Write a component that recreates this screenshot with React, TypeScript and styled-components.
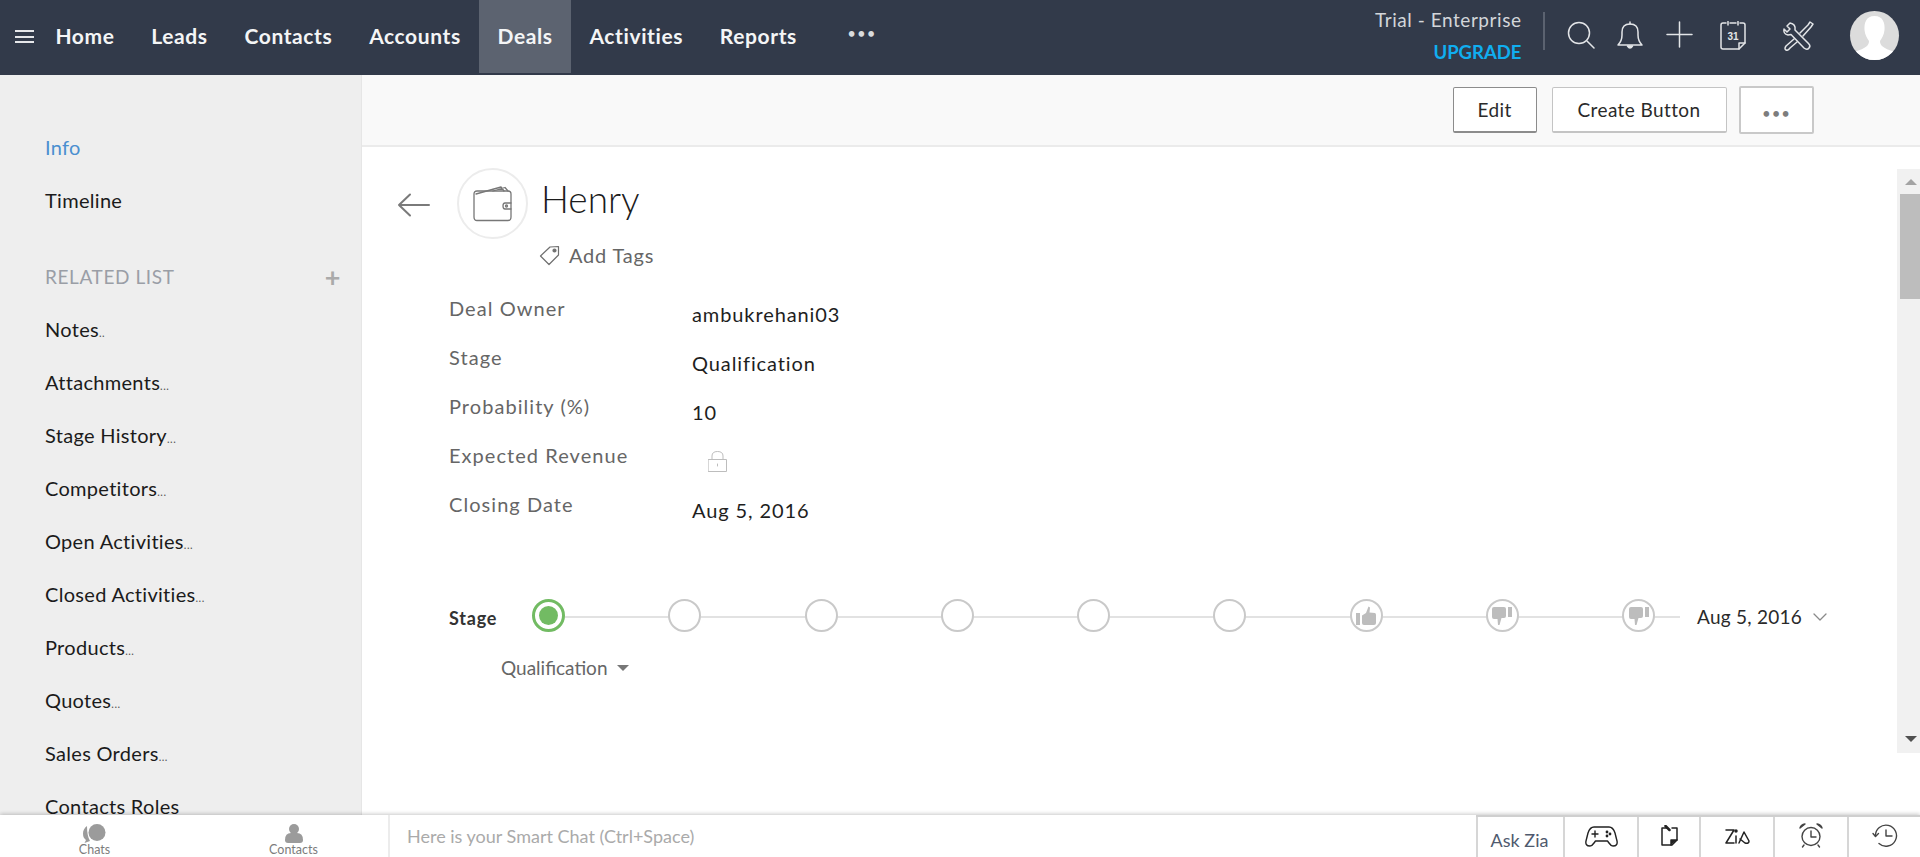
import { FC, ReactNode } from "react";
import styled, { createGlobalStyle } from "styled-components";

const NAV_ITEMS = ["Home", "Leads", "Contacts", "Accounts", "Deals", "Activities", "Reports"];
const SIDE_ITEMS = [
  { name: "Notes", dots: ".." },
  { name: "Attachments", dots: "..." },
  { name: "Stage History", dots: "..." },
  { name: "Competitors", dots: "..." },
  { name: "Open Activities", dots: "..." },
  { name: "Closed Activities", dots: "..." },
  { name: "Products", dots: "..." },
  { name: "Quotes", dots: "..." },
  { name: "Sales Orders", dots: "..." },
  { name: "Contacts Roles", dots: "" },
];
const FIELDS = [
  { label: "Deal Owner", value: "ambukrehani03" },
  { label: "Stage", value: "Qualification" },
  { label: "Probability (%)", value: "10" },
  { label: "Expected Revenue", value: null },
  { label: "Closing Date", value: "Aug 5, 2016" },
];

const Line: FC<{ w: number; h: number; vb?: string; c?: string; sw?: number; children: ReactNode }> = ({
  w,
  h,
  vb,
  c = "currentColor",
  sw = 1.5,
  children,
}) => (
  <svg
    width={w}
    height={h}
    viewBox={vb ?? `0 0 ${w} ${h}`}
    fill="none"
    stroke={c}
    strokeWidth={sw}
    strokeLinecap="round"
    strokeLinejoin="round"
  >
    {children}
  </svg>
);

const ThumbUp = () => (
  <svg width="20" height="20" viewBox="0 0 20 20" fill="#bdbdbd">
    <rect x="0" y="7" width="4" height="12" />
    <path d="M6 9.500 L10 7 L12.500 0.500 L14 1.500 L13.500 6.500 L19 7 Q20 7.500 20 9 L20 17 Q20 19 18 19 L8 19 Q6 19 6 17 Z" />
  </svg>
);

const ThumbDown = () => (
  <svg width="20" height="18" viewBox="0 0 20 18" fill="#bdbdbd">
    <rect x="16" y="0" width="4" height="10" />
    <path d="M2 0 L12 0 Q14 0 14 2 L14 9 Q14 11 12 11 L9.500 11 L7.500 18 L6 18 L5.500 12 L2 12 Q0 12 0 10 L0 2 Q0 0 2 0 Z" />
  </svg>
);

export default function App() {
  return (
    <Page>
      <GlobalStyle />
      <TopBar>
        <Burger>
          <i />
          <i />
          <i />
        </Burger>
        <Nav>
          {NAV_ITEMS.map((n) => (
            <NavItem key={n} $active={n === "Deals"}>
              {n}
            </NavItem>
          ))}
          <NavMore>•••</NavMore>
        </Nav>
        <TopRight>
          <Trial>
            <span>Trial - Enterprise</span>
            <b>UPGRADE</b>
          </Trial>
          <TopSep />
          <TopIcons>
            <Line w={28} h={28} c="#e3e5e8">
              <circle cx="12" cy="12" r="10.500" />
              <path d="M20 20 L27 27" />
            </Line>
            <Line w={30} h={30} c="#e3e5e8">
              <path d="M3 24 Q7 20 7 14 L7 11 Q7 3 15 3 Q23 3 23 11 L23 14 Q23 20 27 24 Z" />
              <path d="M15 1 V3" />
              <path d="M12.500 25 Q15 29 17.500 25 Z" fill="#e3e5e8" />
            </Line>
            <Line w={27} h={27} c="#e3e5e8">
              <path d="M13.500 1 V26 M1 13.500 H26" />
            </Line>
            <Line w={26} h={29} c="#e3e5e8">
              <path d="M6 2 H3 Q1 2 1 4 V26 Q1 28 3 28 H19 L25 22 V4 Q25 2 23 2 H20" />
              <path d="M10 2 H16 M8 0.500 V4 M18 0.500 V4 M19 28 V22 H25" />
              <CalendarDay x="13" y="19" textAnchor="middle">
                31
              </CalendarDay>
            </Line>
            <Line w={32} h={30} c="#e3e5e8">
              <path d="M8 2 L5 5 L8 8 L5 11 L2 8 Q1 13 6 14 L9 13.500 L22 27 Q25 29.500 27 27 Q29 25 26.500 22.500 L13 9 Q14 3 8 2 Z" />
              <path d="M18 12 L26 4 L28 1 L31 3 L29 6 L21 15 M12 18 L4 25 Q2 28 4 29 Q6 30 8 27 L15 21" />
            </Line>
          </TopIcons>
          <Avatar>
            <svg width="49" height="49" viewBox="0 0 49 49">
              <path
                fill="#fff"
                d="M24.500 5 C16 5 14 12 14.500 19 C15 24 17 27 19 30 C19 34 17 37 4 41 L4 49 L45 49 L45 41 C32 37 30 34 30 30 C32 27 34 24 34.500 19 C35 12 33 5 24.500 5 Z"
              />
            </svg>
          </Avatar>
        </TopRight>
      </TopBar>

      <Body>
        <Sidebar>
          <SideLink $active>Info</SideLink>
          <SideLink>Timeline</SideLink>
          <RelatedHead>
            <span>RELATED LIST</span>
            <b>+</b>
          </RelatedHead>
          {SIDE_ITEMS.map((s) => (
            <SideLink key={s.name}>
              {s.name}
              <SideDots>{s.dots}</SideDots>
            </SideLink>
          ))}
        </Sidebar>

        <Content>
          <ActionBar>
            <ActionButton $w={84} $dark>
              Edit
            </ActionButton>
            <ActionButton $w={175}>Create Button</ActionButton>
            <MoreButton>•••</MoreButton>
          </ActionBar>

          <Main>
            <Record>
              <RecordHead>
                <BackArrow>
                  <Line w={33} h={24} c="#7a7a7a" sw={2}>
                    <path d="M32 12 H2 M13 1.500 L2 12 L13 22.500" />
                  </Line>
                </BackArrow>
                <DealAvatar>
                  <Line w={40} h={36} c="#777" sw={1.3}>
                    <path d="M1 8 V31 Q1 34.500 4 34.500 H35 Q38 34.500 38 31 V8 Q38 5 35 5 H4 Q1 5 1 8 Z" />
                    <path d="M3 8 L28 1 L31 5 M20 5 L32 1.500 L35 5" />
                    <path d="M38 17 H32 Q30 17 30 20 Q30 23 32 23 H38" />
                    <circle cx="33.500" cy="20" r="1" />
                  </Line>
                </DealAvatar>
                <TitleBlock>
                  <DealName>Henry</DealName>
                  <AddTags>
                    <Line w={21} h={21} c="#6f6f6f" sw={1.2}>
                      <path d="M1.500 11 L11 2 L19.500 1.500 L19.500 10 L10 19.500 Z" />
                      <circle cx="15.500" cy="5.500" r="1.500" fill="#6f6f6f" />
                    </Line>
                    Add Tags
                  </AddTags>
                </TitleBlock>
              </RecordHead>

              <Fields>
                {FIELDS.map((f) => (
                  <FieldRow key={f.label}>
                    <FieldLabel>{f.label}</FieldLabel>
                    {f.value ? (
                      <FieldValue>{f.value}</FieldValue>
                    ) : (
                      <LockWrap>
                        <Line w={19} h={21} c="#bdbdbd" sw={1}>
                          <rect x="0.500" y="8.500" width="18" height="12" />
                          <path d="M4 8.500 V5 Q4 0.500 9.500 0.500 Q15 0.500 15 5 V8.500 M9.500 13 V15" />
                        </Line>
                      </LockWrap>
                    )}
                  </FieldRow>
                ))}
              </Fields>

              <StageRow>
                <StageLabel>Stage</StageLabel>
                <StageTrack>
                  <StageDot $active>
                    <i />
                  </StageDot>
                  <StageDot />
                  <StageDot />
                  <StageDot />
                  <StageDot />
                  <StageDot />
                  <StageDot>
                    <ThumbUp />
                  </StageDot>
                  <StageDot>
                    <ThumbDown />
                  </StageDot>
                  <StageDot>
                    <ThumbDown />
                  </StageDot>
                </StageTrack>
                <StageDate>
                  Aug 5, 2016
                  <Line w={14} h={8} c="#8a8a8a" sw={1.3}>
                    <path d="M1 1 L7 7 L13 1" />
                  </Line>
                </StageDate>
              </StageRow>
              <StagePick>
                Qualification
                <Caret />
              </StagePick>
            </Record>

            <ScrollBar>
              <ScrollArrow $up />
              <ScrollThumb />
              <ScrollRest />
              <ScrollArrow />
            </ScrollBar>
          </Main>
        </Content>
      </Body>

      <BottomBar>
        <ChatTabs>
          <ChatTab>
            <svg width="24" height="19" viewBox="0 0 24 19" fill="#9b9b9b">
              <circle cx="14" cy="8.500" r="8.500" />
              <path d="M4 2 Q0 5 0 9.500 Q0 14 3 16 L1.500 19 L7 17 Q4 12 4 2 Z" />
            </svg>
            <span>Chats</span>
          </ChatTab>
          <ChatTab>
            <svg width="18" height="19" viewBox="0 0 18 19" fill="#9b9b9b">
              <ellipse cx="9" cy="5" rx="5" ry="5" />
              <path d="M0 16 Q0 9 6 9 H12 Q18 9 18 16 Q18 19 15 19 H3 Q0 19 0 16 Z" />
            </svg>
            <span>Contacts</span>
          </ChatTab>
        </ChatTabs>
        <SmartChat>Here is your Smart Chat (Ctrl+Space)</SmartChat>
        <BottomTools>
          <AskZia>Ask Zia</AskZia>
          <ToolCell $w={74}>
            <Line w={33} h={22} c="#222" sw={1.4}>
              <path d="M9 2 H24 Q28 2 30 8 L32 16 Q33 21 28 21 Q26 21 24 18 L22.500 16 H10.500 L9 18 Q7 21 5 21 Q0 21 1 16 L3 8 Q5 2 9 2 Z" />
              <path d="M7 9 H13 M10 6 V12" />
              <circle cx="22" cy="7" r=".7" fill="#222" />
              <circle cx="25" cy="9" r=".7" fill="#222" />
              <circle cx="22" cy="11" r=".7" fill="#222" />
            </Line>
          </ToolCell>
          <ToolCell $w={62}>
            <Line w={17} h={21} c="#222" sw={1.5}>
              <path d="M6 3 H1 V20 H11 L16 15 V3 H11" />
              <path d="M10 20 V15 H16" fill="#222" />
              <path d="M4.500 1 L8.500 5" strokeWidth={2.5} />
            </Line>
          </ToolCell>
          <ToolCell $w={74}>
            <Line w={25} h={18} c="#222" sw={1.5}>
              <path d="M1 3 H9 L1 16 H9" />
              <path d="M11 9 V16" />
              <path d="M14 16 L19 5 L24 14 Q24 17 20 16 L15 12" />
              <circle cx="11" cy="4" r="1" fill="#222" />
            </Line>
          </ToolCell>
          <ToolCell $w={74}>
            <Line w={24} h={25} c="#444" sw={1.4}>
              <circle cx="12" cy="13.500" r="9" />
              <path d="M12 8 V14 H17 M5 22 L3.500 24 M19 22 L20.500 24" />
              <path d="M1 5 Q2 1.500 6 1 Z M23 5 Q22 1.500 18 1 Z" fill="#444" />
            </Line>
          </ToolCell>
          <ToolCell $w={73}>
            <Line w={26} h={23} c="#444" sw={1.4}>
              <path d="M3.500 12 A10.500 10.500 0 1 1 7 19.500" />
              <path d="M1 9.500 L3.500 12.500 L6.500 9.500 M14 6 V12 H20" />
            </Line>
          </ToolCell>
        </BottomTools>
      </BottomBar>
    </Page>
  );
}

const GlobalStyle = createGlobalStyle`
  html, body {
    margin: 0;
    padding: 0;
    background: #fff;
    overflow: hidden;
  }
  * {
    box-sizing: border-box;
  }
`;

const Page = styled.div`
  display: flex;
  flex-direction: column;
  width: 1920px;
  height: 857px;
  overflow: hidden;
  font-family: "Lato", "Liberation Sans", sans-serif;
  color: #222;
`;

const TopBar = styled.header`
  display: flex;
  align-items: flex-start;
  flex: none;
  height: 75px;
  background: #323a4a;
  color: #fff;
`;
const Burger = styled.div`
  display: flex;
  flex-direction: column;
  justify-content: space-between;
  flex: none;
  width: 19px;
  height: 13px;
  margin: 30px 0 0 15px;
  i {
    display: block;
    height: 2px;
    background: #e6e7ea;
  }
`;
const Nav = styled.nav`
  display: flex;
  margin-left: 3px;
`;
const NavItem = styled.div<{ $active?: boolean }>`
  height: 73px;
  padding: 0 18.4px;
  line-height: 71px;
  font-size: 21px;
  font-weight: 700;
  letter-spacing: 0.6px;
  color: #f4f5f6;
  background: ${(p) => (p.$active ? "#5c6370" : "transparent")};
`;
const NavMore = styled.div`
  margin-left: 32px;
  line-height: 66px;
  font-size: 15px;
  letter-spacing: 1px;
  color: #d9dbde;
`;
const TopRight = styled.div`
  display: flex;
  align-items: flex-start;
  margin-left: auto;
`;
const Trial = styled.div`
  display: flex;
  flex-direction: column;
  align-items: flex-end;
  margin-top: 8px;
  span {
    height: 27px;
    font-size: 19px;
    letter-spacing: 0.55px;
    line-height: 24px;
    color: #d3d6da;
  }
  b {
    margin-top: 5px;
    font-size: 18.5px;
    line-height: 24px;
    color: #10aef0;
  }
`;
const TopSep = styled.div`
  width: 2px;
  height: 38px;
  margin: 12px 0 0 21px;
  background: #5b6270;
`;
const TopIcons = styled.div`
  display: flex;
  align-items: flex-start;
  gap: 20px;
  margin: 21px 0 0 22px;
  svg:nth-child(3) {
    margin-left: 1px;
  }
  svg:nth-child(4) {
    margin-left: 7px;
  }
  svg:nth-child(5) {
    margin-left: 16.5px;
  }
`;
const CalendarDay = styled.text`
  font-family: "Liberation Sans", sans-serif;
  font-size: 10px;
  font-weight: 700;
  fill: #e3e5e8;
  stroke: none;
`;
const Avatar = styled.div`
  flex: none;
  width: 49px;
  height: 49px;
  margin: 11px 21px 0 36px;
  border-radius: 50%;
  overflow: hidden;
  background: #dcdcdc;
  svg {
    display: block;
  }
`;

const Body = styled.div`
  display: flex;
  flex: 1;
  min-height: 0;
`;
const Sidebar = styled.aside`
  flex: none;
  width: 361px;
  padding: 64px 20px 0 45px;
  background: #eee;
  overflow: hidden;
`;
const SideLink = styled.div<{ $active?: boolean }>`
  height: 16px;
  margin-bottom: 37px;
  line-height: 16px;
  font-size: 20px;
  letter-spacing: 0.3px;
  color: ${(p) => (p.$active ? "#4a8fd0" : "#1b1b1b")};
  white-space: nowrap;
`;
const SideDots = styled.span`
  font-size: 11px;
  letter-spacing: 0.5px;
  color: #555;
`;
const RelatedHead = styled.div`
  display: flex;
  justify-content: space-between;
  align-items: center;
  height: 16px;
  margin: 60px 0 37px;
  font-size: 19px;
  letter-spacing: 0.6px;
  color: #9a9ea6;
  b {
    font-size: 27px;
    font-weight: 700;
    color: #aaa;
  }
`;

const Content = styled.main`
  display: flex;
  flex-direction: column;
  flex: 1;
  min-width: 0;
  border-left: 1px solid #e6e6e6;
`;
const ActionBar = styled.div`
  display: flex;
  justify-content: flex-end;
  align-items: center;
  gap: 15px;
  flex: none;
  height: 72px;
  padding-right: 106px;
  background: #f9f9f9;
  border-bottom: 2px solid #ebebeb;
`;
const ActionButton = styled.button<{ $w: number; $dark?: boolean }>`
  width: ${(p) => p.$w}px;
  height: 46px;
  padding: 0;
  background: #fff;
  border: 1px solid ${(p) => (p.$dark ? "#8c8c8c" : "#c4c4c4")};
  border-bottom-width: 2px;
  border-radius: 2px;
  font: 400 19px "Lato", "Liberation Sans", sans-serif;
  letter-spacing: 0.4px;
  color: #2a2a2a;
`;
const MoreButton = styled.button`
  width: 75px;
  height: 48px;
  margin-left: -2.5px;
  padding: 6px 0 0;
  background: #fff;
  border: 2px solid #c9c9c9;
  border-radius: 2px;
  font: 400 15px "Lato", "Liberation Sans", sans-serif;
  letter-spacing: 1px;
  color: #7d7d7d;
`;

const Main = styled.div`
  display: flex;
  flex: 1;
  min-height: 0;
`;
const Record = styled.section`
  flex: 1;
  min-width: 0;
  padding-top: 21px;
`;
const RecordHead = styled.div`
  display: flex;
  align-items: flex-start;
`;
const BackArrow = styled.div`
  margin: 25px 0 0 35px;
`;
const DealAvatar = styled.div`
  display: flex;
  align-items: center;
  justify-content: center;
  flex: none;
  width: 71px;
  height: 71px;
  margin-left: 27px;
  border: 2px solid #ececec;
  border-radius: 50%;
`;
const TitleBlock = styled.div`
  margin-left: 13px;
`;
const DealName = styled.div`
  margin-top: 7px;
  font-size: 37px;
  font-weight: 300;
  line-height: 48px;
  color: #1c1c1c;
`;
const AddTags = styled.div`
  display: flex;
  align-items: center;
  gap: 9px;
  margin: 20px 0 0 -2px;
  font-size: 20px;
  letter-spacing: 0.8px;
  color: #666;
`;
const Fields = styled.div`
  margin: 23px 0 0 87px;
`;
const FieldRow = styled.div`
  display: flex;
  height: 49px;
`;
const FieldLabel = styled.div`
  flex: none;
  width: 243px;
  font-size: 20px;
  letter-spacing: 1.05px;
  line-height: 36px;
  color: #666;
`;
const FieldValue = styled.div`
  padding-top: 6px;
  font-size: 20px;
  letter-spacing: 0.9px;
  line-height: 36px;
  color: #1e1e1e;
`;
const LockWrap = styled.div`
  padding: 14px 0 0 16px;
`;

const StageRow = styled.div`
  display: flex;
  align-items: center;
  margin: 64px 0 0 87px;
`;
const StageLabel = styled.div`
  flex: none;
  width: 83px;
  padding-top: 4px;
  font-size: 18px;
  font-weight: 700;
  letter-spacing: 0.8px;
  color: #333;
`;
const StageTrack = styled.div`
  display: flex;
  justify-content: space-between;
  width: 1148px;
  padding-right: 25px;
  background: linear-gradient(#e2e2e2, #e2e2e2) no-repeat 0 17px / 100% 2px;
`;
const StageDot = styled.div<{ $active?: boolean }>`
  display: flex;
  align-items: center;
  justify-content: center;
  flex: none;
  width: 33px;
  height: 33px;
  background: #fff;
  border: 2px solid ${(p) => (p.$active ? "#72bb63" : "#c9c9c9")};
  border-width: ${(p) => (p.$active ? "3px" : "2px")};
  border-radius: 50%;
  i {
    width: 19px;
    height: 19px;
    background: #72bb63;
    border-radius: 50%;
  }
  svg {
    flex: none;
  }
`;
const StageDate = styled.div`
  display: flex;
  align-items: center;
  gap: 11px;
  margin-left: 17px;
  padding-top: 2px;
  font-size: 19px;
  letter-spacing: 0.25px;
  color: #2a2a2a;
`;
const StagePick = styled.div`
  display: flex;
  align-items: center;
  gap: 9px;
  margin: 24px 0 0 139px;
  font-size: 19px;
  color: #666;
`;
const Caret = styled.i`
  width: 0;
  height: 0;
  border-left: 6.5px solid transparent;
  border-right: 6.5px solid transparent;
  border-top: 6px solid #777;
`;

const ScrollBar = styled.div`
  display: flex;
  flex-direction: column;
  align-items: flex-end;
  flex: none;
  width: 23px;
  height: 584px;
  margin-top: 22px;
  background: #f1f1f1;
`;
const ScrollArrow = styled.i<{ $up?: boolean }>`
  flex: none;
  width: 0;
  height: 0;
  margin: ${(p) => (p.$up ? "10px 3px 9px" : "8px 3px 11px")};
  border-left: 6px solid transparent;
  border-right: 6px solid transparent;
  ${(p) => (p.$up ? "border-bottom: 6px solid #a3a3a3;" : "border-top: 6px solid #505050;")}
`;
const ScrollThumb = styled.div`
  flex: none;
  width: 20px;
  height: 105px;
  background: #bdbdbd;
`;
const ScrollRest = styled.div`
  flex: 1;
`;

const BottomBar = styled.footer`
  position: relative;
  display: flex;
  flex: none;
  height: 42px;
  background: #fff;
  box-shadow: 0 -1px 4px rgba(0, 0, 0, 0.22);
`;
const ChatTabs = styled.div`
  display: flex;
  gap: 10px;
  flex: none;
  width: 390px;
  border-right: 2px solid #ececec;
`;
const ChatTab = styled.div`
  display: flex;
  flex-direction: column;
  align-items: center;
  width: 190px;
  padding-top: 9px;
  span {
    font-size: 12.5px;
    line-height: 14px;
    color: #7c7c7c;
  }
`;
const SmartChat = styled.div`
  flex: 1;
  padding-left: 17px;
  line-height: 42px;
  font-size: 18px;
  color: #aaa;
`;
const BottomTools = styled.div`
  display: flex;
  flex: none;
  border-top: 2px solid #cfcfcf;
`;
const AskZia = styled.div`
  width: 87px;
  padding-right: 2px;
  border-left: 2px solid #d6d6d6;
  text-align: center;
  line-height: 46px;
  font-size: 18px;
  color: #4f5a6e;
`;
const ToolCell = styled.div<{ $w: number }>`
  display: flex;
  align-items: center;
  justify-content: center;
  width: ${(p) => p.$w}px;
  padding-bottom: 3px;
  border-left: 2px solid #d6d6d6;
`;
